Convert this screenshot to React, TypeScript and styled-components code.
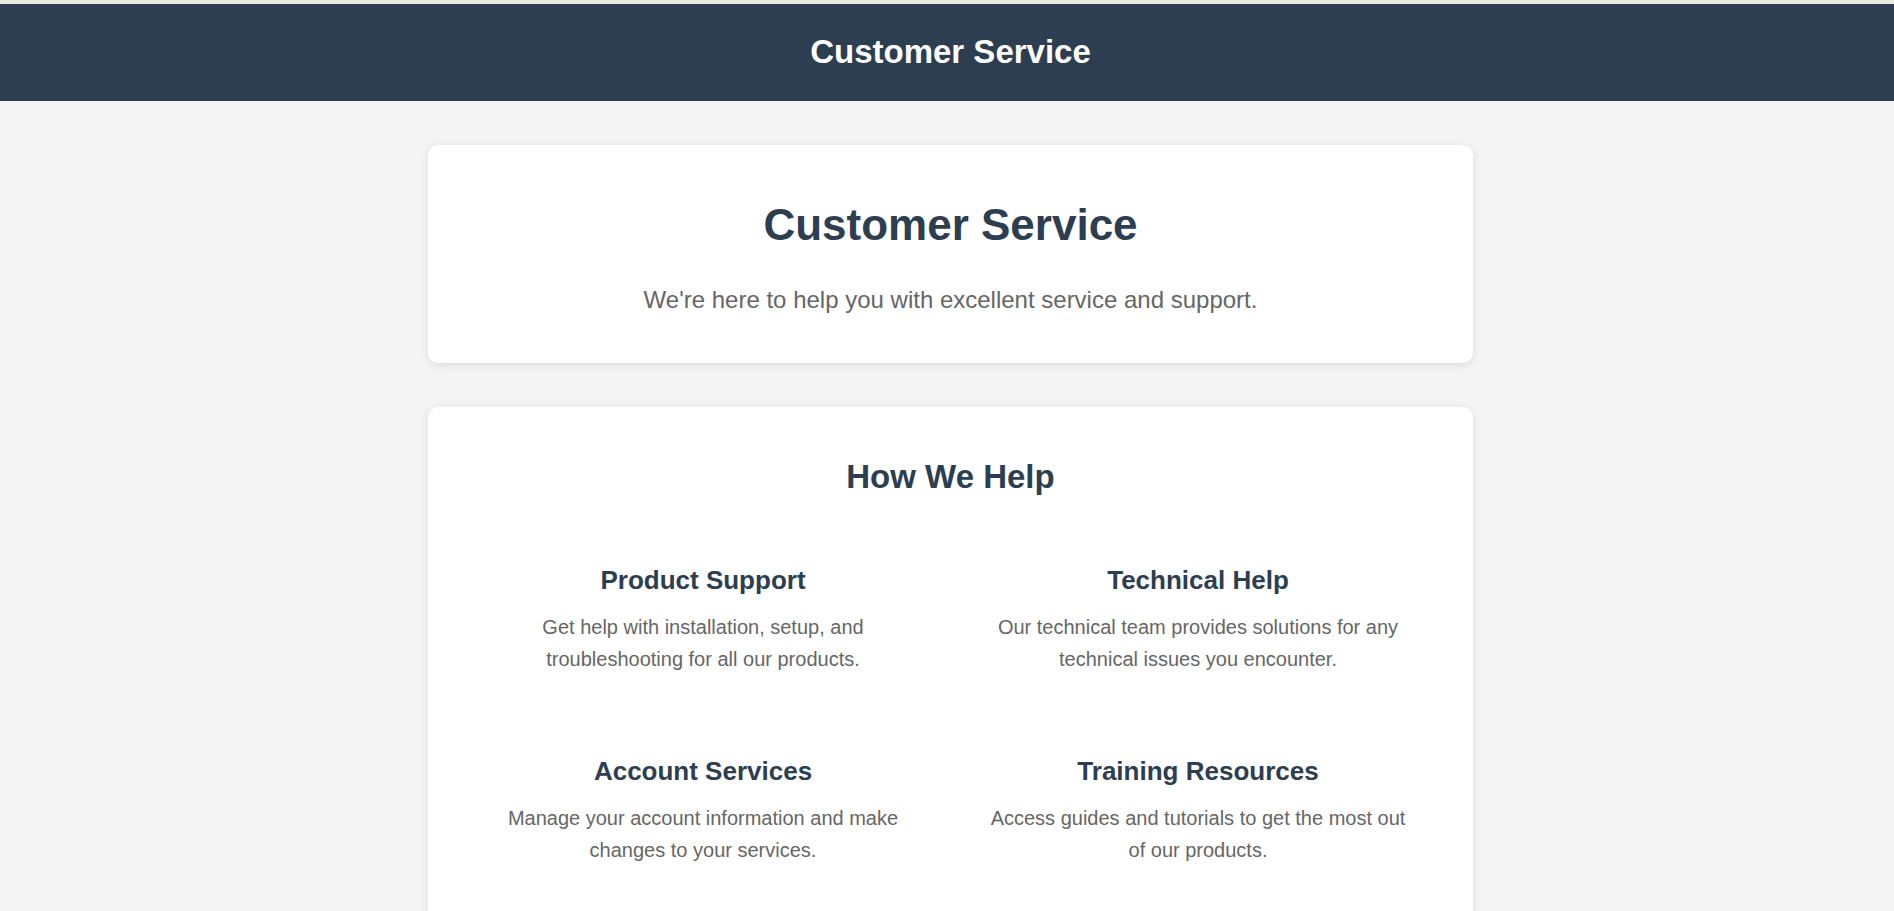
import React from "react";
import styled, { createGlobalStyle } from "styled-components";

const GlobalStyle = createGlobalStyle`
  html, body {
    margin: 0;
    padding: 0;
    background: #f4f4f4;
    font-family: "Liberation Sans", Arial, Helvetica, sans-serif;
    overflow-x: hidden;
  }
  * { box-sizing: border-box; }
`;

const Page = styled.div`
  display: flex;
  flex-direction: column;
  min-height: 100vh;
  background: #f4f4f4;
`;

const TopStrip = styled.div`
  height: 4px;
  background: #e8ecdf;
`;

const Header = styled.header`
  background: #2c3e50;
  padding: 29px 0 31px 7px;
  text-align: center;
`;

const HeaderTitle = styled.h1`
  margin: 0;
  color: #ffffff;
  font-size: 33px;
  line-height: 37px;
  font-weight: 700;
`;

const Main = styled.main`
  padding: 44px 0 0 7px;
  display: flex;
  flex-direction: column;
  align-items: center;
  gap: 44px;
`;

const Card = styled.section<{ $pad: string }>`
  width: 1045px;
  background: #ffffff;
  border-radius: 10px;
  box-shadow: 0 2px 10px rgba(0, 0, 0, 0.1);
  padding: ${(p) => p.$pad};
  text-align: center;
`;

const HeroTitle = styled.h2`
  margin: 0;
  color: #2c3e50;
  font-size: 44px;
  font-weight: 700;
  line-height: normal;
`;

const HeroText = styled.p`
  margin: 36px 0 0;
  color: #666666;
  font-size: 24px;
  line-height: normal;
`;

const SectionTitle = styled.h2`
  margin: 0 0 49px;
  color: #2c3e50;
  font-size: 33px;
  font-weight: 700;
  line-height: normal;
`;

const ServiceGrid = styled.div`
  display: grid;
  grid-template-columns: 1fr 1fr;
  column-gap: 25px;
  row-gap: 41px;
`;

const ServiceItem = styled.div`
  padding: 20px 24px;
  display: flex;
  flex-direction: column;
  align-items: center;
  gap: 15px;
`;

const ServiceName = styled.h3`
  margin: 0;
  color: #2c3e50;
  font-size: 26px;
  font-weight: 700;
  line-height: normal;
`;

const ServiceText = styled.p`
  margin: 0;
  color: #666666;
  font-size: 20px;
  line-height: 32px;
`;

const services = [
  {
    name: "Product Support",
    text: "Get help with installation, setup, and troubleshooting for all our products.",
  },
  {
    name: "Technical Help",
    text: "Our technical team provides solutions for any technical issues you encounter.",
  },
  {
    name: "Account Services",
    text: "Manage your account information and make changes to your services.",
  },
  {
    name: "Training Resources",
    text: "Access guides and tutorials to get the most out of our products.",
  },
];

export default function App() {
  return (
    <>
      <GlobalStyle />
      <Page>
        <TopStrip />
        <Header>
          <HeaderTitle>Customer Service</HeaderTitle>
        </Header>
        <Main>
          <Card $pad="55px 40px 49px">
            <HeroTitle>Customer Service</HeroTitle>
            <HeroText>We're here to help you with excellent service and support.</HeroText>
          </Card>
          <Card $pad="51px 40px 40px">
            <SectionTitle>How We Help</SectionTitle>
            <ServiceGrid>
              {services.map((s) => (
                <ServiceItem key={s.name}>
                  <ServiceName>{s.name}</ServiceName>
                  <ServiceText>{s.text}</ServiceText>
                </ServiceItem>
              ))}
            </ServiceGrid>
          </Card>
        </Main>
      </Page>
    </>
  );
}
